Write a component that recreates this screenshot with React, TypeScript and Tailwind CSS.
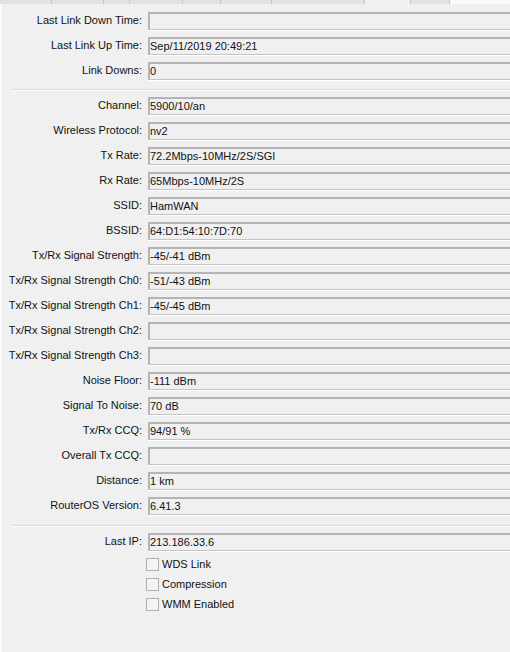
const topRows: [string, string][] = [
  ["Last Link Down Time:", ""],
  ["Last Link Up Time:", "Sep/11/2019 20:49:21"],
  ["Link Downs:", "0"],
];

const midRows: [string, string][] = [
  ["Channel:", "5900/10/an"],
  ["Wireless Protocol:", "nv2"],
  ["Tx Rate:", "72.2Mbps-10MHz/2S/SGI"],
  ["Rx Rate:", "65Mbps-10MHz/2S"],
  ["SSID:", "HamWAN"],
  ["BSSID:", "64:D1:54:10:7D:70"],
  ["Tx/Rx Signal Strength:", "-45/-41 dBm"],
  ["Tx/Rx Signal Strength Ch0:", "-51/-43 dBm"],
  ["Tx/Rx Signal Strength Ch1:", "-45/-45 dBm"],
  ["Tx/Rx Signal Strength Ch2:", ""],
  ["Tx/Rx Signal Strength Ch3:", ""],
  ["Noise Floor:", "-111 dBm"],
  ["Signal To Noise:", "70 dB"],
  ["Tx/Rx CCQ:", "94/91 %"],
  ["Overall Tx CCQ:", ""],
  ["Distance:", "1 km"],
  ["RouterOS Version:", "6.41.3"],
];

const flags = ["WDS Link", "Compression", "WMM Enabled"];

// tab strip peeking in at the top edge
const tabs = [52, 52, 26, 53, 38, 51, 93];

function Row({ label, value }: { label: string; value: string }) {
  return (
    <div className="flex h-[25px] items-center">
      <div className="w-[141px] shrink-0 whitespace-nowrap pr-[1px] text-right">{label}</div>
      <div className="ml-[5px] flex h-[18px] flex-1 items-center border-l-2 border-t-2 border-b border-l-[#b4b4b4] border-t-[#b4b4b4] border-b-[#c4c4c4] bg-[#f0f0f0] shadow-[0_1px_0_#ffffff]">
        <span className="whitespace-nowrap">{value}</span>
      </div>
    </div>
  );
}

function Separator({ h }: { h: string }) {
  return (
    <div className={`flex ${h} items-end pl-[10px]`}>
      <div className="mb-[3px] h-[1px] w-full bg-[#d8d8d8] shadow-[0_1px_0_#ffffff]" />
    </div>
  );
}

export default function App() {
  return (
    <div
      className="flex h-[652px] w-[510px] flex-col overflow-hidden bg-[#f0f0f0] text-[11px] text-[#111111]"
      style={{ fontFamily: '"Liberation Sans", Arial, sans-serif' }}
    >
      <div className="flex h-[4px] shrink-0 bg-[#ffffff]">
        {tabs.map((w, i) => (
          <div key={i} style={{ width: w }} className="border-r border-[#c4c4c4] bg-[#e2e2e2]" />
        ))}
        <div className="w-[45px] bg-[#f0f0f0]" />
        <div className="w-[40px] border-x border-[#c4c4c4] bg-[#e2e2e2]" />
        <div className="flex-1 bg-[#f9f9f9]" />
      </div>
      <div className="w-[540px] flex-1 border-l-2 border-[#fafafa] bg-[#f0f0f0] pt-[4px]">
        {topRows.map(([l, v]) => (
          <Row key={l} label={l} value={v} />
        ))}
        <Separator h="h-[10px]" />
        {midRows.map(([l, v]) => (
          <Row key={l} label={l} value={v} />
        ))}
        <Separator h="h-[11px]" />
        <Row label="Last IP:" value="213.186.33.6" />
        {flags.map((f) => (
          <div key={f} className="flex h-[20px] items-center pl-[144px]">
            <div className="h-[13px] w-[13px] border border-[#b0b0b0] bg-[#f4f4f4]" />
            <span className="ml-[3px]">{f}</span>
          </div>
        ))}
      </div>
    </div>
  );
}
